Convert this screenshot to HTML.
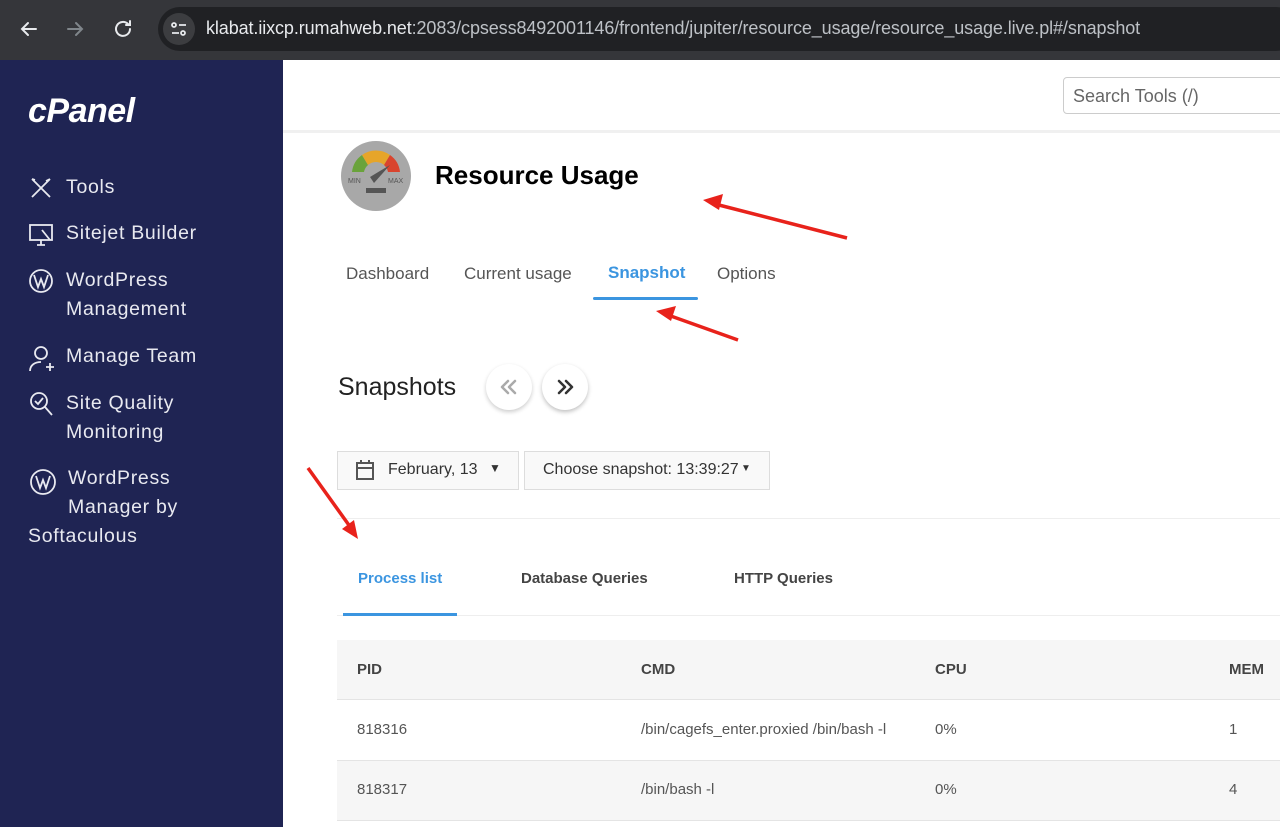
<!DOCTYPE html>
<html><head><meta charset="utf-8"><style>
*{margin:0;padding:0;box-sizing:border-box}
body{width:1280px;height:827px;overflow:hidden;position:relative;font-family:"Liberation Sans",sans-serif;background:#fff}
.bar{position:absolute;left:0;top:0;width:1280px;height:60px;background:#35363a}
.pill{position:absolute;left:158px;top:7px;width:1140px;height:44px;border-radius:22px;background:#202124}
.url{position:absolute;left:206px;top:18px;font-size:18px;color:#bdc1c6;letter-spacing:-0.1px}
.url b{color:#e8eaed;font-weight:normal}
.side{position:absolute;left:0;top:60px;width:283px;height:767px;background:#1f2453}
.logo{position:absolute;left:28px;top:92px;color:#fff;font:italic bold 34px "Liberation Sans",sans-serif;letter-spacing:-0.5px}
.nav{position:absolute;color:#e8e9f0;font-size:19.5px;line-height:29px;letter-spacing:0.7px}
.abs{position:absolute}
.t{position:absolute;white-space:nowrap}
</style></head><body>
<div class="bar"></div>
<svg class="abs" style="left:18px;top:18px" width="120" height="24" fill="none" stroke-width="2" stroke-linecap="round">
<path d="M18 11H4M10 5l-6 6 6 6" stroke="#e8eaed"/>
<path d="M50 11h14M58 5l6 6-6 6" stroke="#80868b"/>
<path d="M112 11a7 7 0 1 1-2-5M112 3v4h-4" stroke="#e8eaed"/>
</svg>
<div class="pill"></div>
<div class="abs" style="left:163px;top:13px;width:32px;height:32px;border-radius:16px;background:#3c3d40"></div>
<svg class="abs" style="left:170px;top:20px" width="18" height="18" fill="none" stroke="#e8eaed" stroke-width="1.8"><circle cx="4" cy="5" r="2"/><path d="M9 5h7M2 13h7"/><circle cx="13" cy="13" r="2"/></svg>
<div class="url"><b>klabat.iixcp.rumahweb.net</b>:2083/cpsess8492001146/frontend/jupiter/resource_usage/resource_usage.live.pl#/snapshot</div>

<div class="side"></div>
<div class="logo">cPanel</div>
<svg class="abs" style="left:28px;top:175px" width="28" height="380" fill="none" stroke="#e8e9f0" stroke-width="1.8">
<path d="M4 4l18 18M22 4L4 22M4 4l3 1M18 6l4-2"/>
<rect x="2" y="50" width="22" height="15"/><path d="M9 70h8M13 65v5M14 55l8 10"/>
<circle cx="13" cy="106" r="11"/><path d="M6 100l4 12 3-8 3 8 4-12"/>
<circle cx="13" cy="178" r="6"/><path d="M2 196c0-6 5-9 11-9M22 188v8M18 192h8"/>
<circle cx="11" cy="226" r="8"/><path d="M17 232l7 8M7 226l3 3 5-6"/>
<circle cx="15" cy="307" r="12"/><path d="M8 301l4 12 3-8 3 8 4-12"/>
</svg>
<div class="nav" style="left:66px;top:173px">Tools</div>
<div class="nav" style="left:66px;top:219px">Sitejet Builder</div>
<div class="nav" style="left:66px;top:266px">WordPress<br>Management</div>
<div class="nav" style="left:66px;top:342px">Manage Team</div>
<div class="nav" style="left:66px;top:389px">Site Quality<br>Monitoring</div>
<div class="nav" style="left:28px;top:464px;"><span style="padding-left:40px">WordPress</span><br><span style="padding-left:40px">Manager by</span><br>Softaculous</div>

<div class="abs" style="left:283px;top:130px;width:997px;height:3px;background:#f0f0f0"></div>
<div class="abs" style="left:1063px;top:77px;width:240px;height:37px;border:1px solid #ccc;border-radius:4px"></div>
<div class="t" style="left:1073px;top:86px;font-size:18px;color:#666">Search Tools (/)</div>

<svg class="abs" style="left:340px;top:140px" width="72" height="72">
<circle cx="36" cy="36" r="35" fill="#a8a8a8"/>
<path d="M12 32a24 24 0 0 1 10-17l6 10a12 12 0 0 0-4 7z" fill="#6aa33b"/>
<path d="M22 15a24 24 0 0 1 28 0l-6 10a12 12 0 0 0-16 0z" fill="#e6a52a"/>
<path d="M50 15a24 24 0 0 1 10 17h-12a12 12 0 0 0-4-7z" fill="#d9442e"/>
<path d="M30 37l20-12-16 18z" fill="#555"/>
<text x="8" y="43" font-size="7" fill="#555">MIN</text><text x="48" y="43" font-size="7" fill="#555">MAX</text>
<rect x="26" y="48" width="20" height="5" fill="#555"/>
</svg>
<div class="t" style="left:435px;top:160px;font-size:26px;font-weight:bold;color:#000">Resource Usage</div>

<div class="t" style="left:346px;top:264px;font-size:17px;color:#555">Dashboard</div>
<div class="t" style="left:464px;top:264px;font-size:17px;color:#555">Current usage</div>
<div class="t" style="left:608px;top:263px;font-size:17px;color:#3b95e0;font-weight:bold">Snapshot</div>
<div class="abs" style="left:593px;top:297px;width:105px;height:3px;background:#3b95e0;border-radius:2px"></div>
<div class="t" style="left:717px;top:264px;font-size:17px;color:#555">Options</div>

<div class="t" style="left:338px;top:373px;font-size:25px;color:#222">Snapshots</div>
<div class="abs" style="left:486px;top:364px;width:46px;height:46px;border-radius:23px;background:#fff;box-shadow:0 2px 4px rgba(0,0,0,.2)"></div>
<div class="abs" style="left:542px;top:364px;width:46px;height:46px;border-radius:23px;background:#fff;box-shadow:0 2px 4px rgba(0,0,0,.25)"></div>
<svg class="abs" style="left:486px;top:364px" width="102" height="46" fill="none" stroke-width="2.5" stroke-linecap="round" stroke-linejoin="round">
<path d="M22 17l-6 6 6 6M29 17l-6 6 6 6" stroke="#aaa"/>
<path d="M73 17l6 6-6 6M80 17l6 6-6 6" stroke="#333"/>
</svg>

<div class="abs" style="left:337px;top:451px;width:182px;height:39px;border:1px solid #ddd;background:#f9f9f9"></div>
<svg class="abs" style="left:355px;top:459px" width="20" height="22" fill="none" stroke="#555" stroke-width="2"><rect x="2" y="4" width="16" height="16"/><path d="M2 9h16M6 1v4M14 1v4"/></svg>
<div class="t" style="left:388px;top:461px;font-size:16px;color:#333">February, 13</div>
<div class="t" style="left:489px;top:461px;font-size:12px;color:#333">▼</div>
<div class="abs" style="left:524px;top:451px;width:246px;height:39px;border:1px solid #ddd;background:#f9f9f9"></div>
<div class="t" style="left:543px;top:461px;font-size:16px;color:#333">Choose snapshot: 13:39:27</div>
<div class="t" style="left:741px;top:463px;font-size:10px;color:#333">▼</div>

<div class="abs" style="left:337px;top:518px;width:943px;height:1px;background:#eee"></div>
<div class="t" style="left:358px;top:570px;font-size:15px;color:#3b95e0;font-weight:bold">Process list</div>
<div class="t" style="left:521px;top:570px;font-size:15px;color:#444;font-weight:bold">Database Queries</div>
<div class="t" style="left:734px;top:570px;font-size:15px;color:#444;font-weight:bold">HTTP Queries</div>
<div class="abs" style="left:337px;top:615px;width:943px;height:1px;background:#eee"></div>
<div class="abs" style="left:343px;top:613px;width:114px;height:3px;background:#3b95e0"></div>

<div class="abs" style="left:337px;top:640px;width:943px;height:60px;background:#f6f6f6;border-bottom:1px solid #e4e4e4"></div>
<div class="abs" style="left:337px;top:760px;width:943px;height:61px;background:#f6f6f6;border-top:1px solid #e4e4e4;border-bottom:1px solid #e4e4e4"></div>
<div class="t" style="left:357px;top:661px;font-size:15px;font-weight:bold;color:#444">PID</div>
<div class="t" style="left:641px;top:661px;font-size:15px;font-weight:bold;color:#444">CMD</div>
<div class="t" style="left:935px;top:661px;font-size:15px;font-weight:bold;color:#444">CPU</div>
<div class="t" style="left:1229px;top:661px;font-size:15px;font-weight:bold;color:#444">MEM</div>
<div class="t" style="left:357px;top:721px;font-size:15px;color:#555">818316</div>
<div class="t" style="left:641px;top:721px;font-size:15px;color:#555">/bin/cagefs_enter.proxied /bin/bash -l</div>
<div class="t" style="left:935px;top:721px;font-size:15px;color:#555">0%</div>
<div class="t" style="left:1229px;top:721px;font-size:15px;color:#555">1</div>
<div class="t" style="left:357px;top:781px;font-size:15px;color:#555">818317</div>
<div class="t" style="left:641px;top:781px;font-size:15px;color:#555">/bin/bash -l</div>
<div class="t" style="left:935px;top:781px;font-size:15px;color:#555">0%</div>
<div class="t" style="left:1229px;top:781px;font-size:15px;color:#555">4</div>

<svg class="abs" style="left:0;top:0" width="1280" height="827" stroke="#e8221b" stroke-width="3.5" fill="#e8221b">
<line x1="847" y1="238" x2="715" y2="204"/><path d="M703 200l20-6-4 16z" stroke="none"/>
<line x1="738" y1="340" x2="668" y2="315"/><path d="M656 311l20-5-5 15z" stroke="none"/>
<line x1="308" y1="468" x2="351" y2="528"/><path d="M358 539l-16-10 12-9z" stroke="none"/>
</svg>
</body></html>
